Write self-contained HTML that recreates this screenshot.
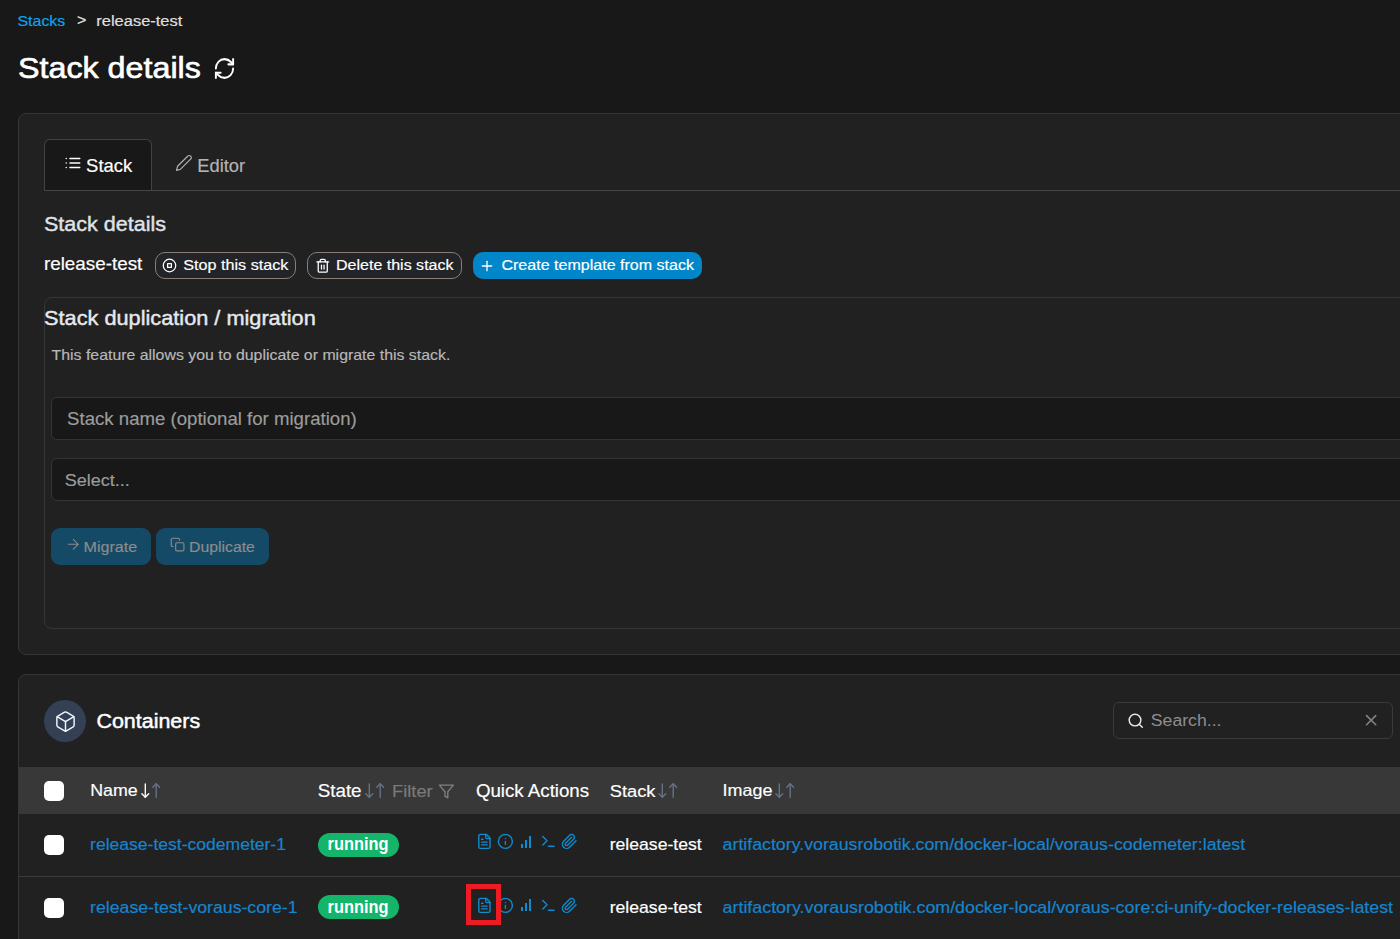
<!DOCTYPE html>
<html><head><meta charset="utf-8">
<style>
html,body{margin:0;padding:0;width:1400px;height:939px;overflow:hidden;background:#181818;}
body{position:relative;font-family:"Liberation Sans",sans-serif;color:#fff;}
.a{position:absolute;box-sizing:border-box;}
.t{position:absolute;white-space:nowrap;line-height:1;-webkit-text-stroke-width:0.18px;}
svg{position:absolute;overflow:visible;}
.card{position:absolute;left:18px;width:1500px;background:#212121;border:1px solid #363636;border-radius:8px;box-sizing:border-box;}
.btn-o{position:absolute;top:252px;height:27px;border:1px solid #877f76;border-radius:10px;background:#232428;box-sizing:border-box;}
.inp{position:absolute;left:51px;width:1450px;background:#181818;border:1px solid #343434;border-radius:6px;box-sizing:border-box;}
.cb{position:absolute;left:44px;width:20px;height:20px;background:#fff;border-radius:5px;}
.badge{position:absolute;left:318px;width:81px;height:24px;background:#14b56b;border-radius:12px;}
</style></head><body>
<div class="t" style="left:17.50px;top:12.52px;font-size:15.93px;color:#0ea5ef;transform:scaleY(0.94);transform-origin:0 13.48px;">Stacks</div>
<div class="t" style="left:76.90px;top:12.46px;font-size:16.00px;color:#e0e0e0;transform:scaleY(0.94);transform-origin:0 13.54px;">&gt;</div>
<div class="t" style="left:96.30px;top:12.05px;font-size:16.48px;color:#e0e0e0;transform:scaleY(0.94);transform-origin:0 13.95px;">release-test</div>
<div class="t" style="left:18.00px;top:50.80px;font-size:32.25px;color:#ffffff;transform:scaleY(0.94);transform-origin:0 27.30px;-webkit-text-stroke-width:0.7px;">Stack details</div>
<svg style="left:213.00px;top:55.70px" width="23.00" height="25.00" viewBox="0 0 24 24" preserveAspectRatio="none" fill="none" stroke="#ffffff" stroke-width="2" stroke-linecap="round" stroke-linejoin="round"><path d="M3 12a9 9 0 0 1 9-9 9.75 9.75 0 0 1 6.74 2.74L21 8"/><path d="M21 3v5h-5"/><path d="M21 12a9 9 0 0 1-9 9 9.75 9.75 0 0 1-6.74-2.74L3 16"/><path d="M8 16H3v5"/></svg>
<div class="card" style="top:113px;height:542px;"></div>
<div class="a" style="left:44px;top:190px;width:1400px;height:1px;background:#464646;"></div>
<div class="a" style="left:44px;top:139px;width:108px;height:51px;background:#181818;border:1px solid #424242;border-bottom:none;border-radius:6px 6px 0 0;"></div>
<svg style="left:63.50px;top:153.70px" width="18.00" height="18.00" viewBox="0 0 24 24" fill="none" stroke="#ffffff" stroke-width="2" stroke-linecap="round" stroke-linejoin="round"><line x1="8" x2="21" y1="6" y2="6"/><line x1="8" x2="21" y1="12" y2="12"/><line x1="8" x2="21" y1="18" y2="18"/><line x1="3" x2="3.01" y1="6" y2="6"/><line x1="3" x2="3.01" y1="12" y2="12"/><line x1="3" x2="3.01" y1="18" y2="18"/></svg>
<div class="t" style="left:86.10px;top:156.88px;font-size:18.46px;color:#ffffff;">Stack</div>
<svg style="left:175.20px;top:154.40px" width="17.80" height="17.80" viewBox="0 0 24 24" fill="none" stroke="#b0b0b0" stroke-width="1.6" stroke-linecap="round" stroke-linejoin="round"><path d="M17 3a2.85 2.83 0 1 1 4 4L7.5 20.5 2 22l1.5-5.5Z"/></svg>
<div class="t" style="left:197.30px;top:156.71px;font-size:18.30px;color:#b4b4b4;">Editor</div>
<div class="t" style="left:43.90px;top:213.45px;font-size:21.56px;color:#dfe2e6;transform:scaleY(0.94);transform-origin:0 18.25px;-webkit-text-stroke-width:0.45px;">Stack details</div>
<div class="t" style="left:43.90px;top:254.84px;font-size:18.85px;color:#ffffff;transform:scaleY(0.94);transform-origin:0 15.96px;">release-test</div>
<div class="btn-o" style="left:155px;width:141px;"></div>
<svg style="left:162.00px;top:257.80px" width="15.00" height="15.00" viewBox="0 0 24 24" fill="none" stroke="#ffffff" stroke-width="2" stroke-linecap="round" stroke-linejoin="round"><circle cx="12" cy="12" r="10"/><rect width="6" height="6" x="9" y="9"/></svg>
<div class="t" style="left:183.30px;top:255.71px;font-size:16.17px;color:#ffffff;transform:scaleY(0.94);transform-origin:0 13.69px;">Stop this stack</div>
<div class="btn-o" style="left:307px;width:155px;"></div>
<svg style="left:314.70px;top:257.90px" width="15.50" height="15.50" viewBox="0 0 24 24" fill="none" stroke="#ffffff" stroke-width="2" stroke-linecap="round" stroke-linejoin="round"><path d="M3 6h18"/><path d="M19 6v14c0 1-1 2-2 2H7c-1 0-2-1-2-2V6"/><path d="M8 6V4c0-1 1-2 2-2h4c1 0 2 1 2 2v2"/><line x1="10" x2="10" y1="11" y2="17"/><line x1="14" x2="14" y1="11" y2="17"/></svg>
<div class="t" style="left:336.00px;top:255.83px;font-size:16.03px;color:#ffffff;transform:scaleY(0.94);transform-origin:0 13.57px;">Delete this stack</div>
<div class="a" style="left:473px;top:252px;width:229px;height:27px;background:#0086c9;border-radius:10px;"></div>
<svg style="left:479.30px;top:257.50px" width="16.00" height="16.00" viewBox="0 0 24 24" fill="none" stroke="#ffffff" stroke-width="2" stroke-linecap="round" stroke-linejoin="round"><path d="M5 12h14"/><path d="M12 5v14"/></svg>
<div class="t" style="left:501.40px;top:255.81px;font-size:16.06px;color:#ffffff;transform:scaleY(0.94);transform-origin:0 13.59px;">Create template from stack</div>
<div class="a" style="left:44px;top:297px;width:1400px;height:332px;border:1px solid #363636;border-radius:8px;"></div>
<div class="t" style="left:44.10px;top:307.22px;font-size:21.72px;color:#e6e9ee;transform:scaleY(0.94);transform-origin:0 18.38px;-webkit-text-stroke-width:0.45px;">Stack duplication / migration</div>
<div class="t" style="left:51.50px;top:346.75px;font-size:15.89px;color:#b8b8b8;transform:scaleY(0.94);transform-origin:0 13.45px;">This feature allows you to duplicate or migrate this stack.</div>
<div class="inp" style="top:397px;height:43px;"></div>
<div class="t" style="left:67.10px;top:409.93px;font-size:18.63px;color:#9c9c9c;transform:scaleY(0.94);transform-origin:0 15.77px;">Stack name (optional for migration)</div>
<div class="inp" style="top:458px;height:43px;"></div>
<div class="t" style="left:64.70px;top:471.37px;font-size:17.99px;color:#9c9c9c;transform:scaleY(0.94);transform-origin:0 15.23px;">Select...</div>
<div class="a" style="left:51px;top:528px;width:100px;height:37px;background:#154a66;border-radius:9px;"></div>
<svg style="left:64.60px;top:536.40px" width="16.60" height="16.60" viewBox="0 0 24 24" fill="none" stroke="#8a8a8a" stroke-width="1.5" stroke-linecap="round" stroke-linejoin="round"><path d="M5 12h14"/><path d="m12 5 7 7-7 7"/></svg>
<div class="t" style="left:83.50px;top:538.44px;font-size:16.13px;color:#8c8c8c;transform:scaleY(0.94);transform-origin:0 13.66px;">Migrate</div>
<div class="a" style="left:156px;top:528px;width:113px;height:37px;background:#154a66;border-radius:9px;"></div>
<svg style="left:169.80px;top:537.30px" width="15.20" height="15.20" viewBox="0 0 24 24" fill="none" stroke="#8a8a8a" stroke-width="1.8" stroke-linecap="round" stroke-linejoin="round"><rect x="9" y="9" width="13" height="13" rx="2" ry="2"/><path d="M5 15H4a2 2 0 0 1-2-2V4a2 2 0 0 1 2-2h9a2 2 0 0 1 2 2v1"/></svg>
<div class="t" style="left:189.00px;top:538.72px;font-size:15.81px;color:#8c8c8c;transform:scaleY(0.94);transform-origin:0 13.38px;">Duplicate</div>
<div class="card" style="top:674px;height:400px;"></div>
<div class="a" style="left:44px;top:700px;width:42px;height:42px;border-radius:50%;background:#344054;"></div>
<svg style="left:53.50px;top:710.30px" width="23.00" height="23.00" viewBox="0 0 24 24" fill="none" stroke="#f2f6ff" stroke-width="1.5" stroke-linecap="round" stroke-linejoin="round"><path d="M21 16V8a2 2 0 0 0-1-1.73l-7-4a2 2 0 0 0-2 0l-7 4A2 2 0 0 0 3 8v8a2 2 0 0 0 1 1.73l7 4a2 2 0 0 0 2 0l7-4A2 2 0 0 0 21 16z"/><polyline points="3.27 6.96 12 12.01 20.73 6.96"/><line x1="12" y1="22.08" x2="12" y2="12"/></svg>
<div class="t" style="left:96.40px;top:711.33px;font-size:21.46px;color:#ffffff;transform:scaleY(0.94);transform-origin:0 18.17px;-webkit-text-stroke-width:0.5px;">Containers</div>
<div class="a" style="left:1113px;top:702px;width:280px;height:37px;border:1px solid #3a3a3a;border-radius:6px;background:#212121;"></div>
<svg style="left:1126.80px;top:712.10px" width="17.50" height="17.50" viewBox="0 0 24 24" fill="none" stroke="#e8e8e8" stroke-width="2" stroke-linecap="round" stroke-linejoin="round"><circle cx="11" cy="11" r="8"/><path d="m21 21-4.3-4.3"/></svg>
<div class="t" style="left:1150.80px;top:712.05px;font-size:17.67px;color:#8e8e8e;transform:scaleY(0.94);transform-origin:0 14.95px;-webkit-text-stroke-width:0;">Search...</div>
<svg style="left:1361.60px;top:711.30px" width="18.30" height="18.30" viewBox="0 0 24 24" fill="none" stroke="#838383" stroke-width="2.1" stroke-linecap="round" stroke-linejoin="round"><path d="M18 6 6 18"/><path d="m6 6 12 12"/></svg>
<div class="a" style="left:19px;top:767px;width:1400px;height:47px;background:#383838;"></div>
<div class="cb" style="top:781px;"></div>
<div class="t" style="left:90.20px;top:782.40px;font-size:17.84px;color:#ffffff;transform:scaleY(0.94);transform-origin:0 15.10px;">Name</div>
<svg style="left:140.60px;top:783.00px" width="20" height="15" viewBox="0 0 20 15" fill="none" stroke-width="1.35" stroke-linecap="round" stroke-linejoin="round"><g stroke="#ffffff"><path d="M4.3 .8V14.2"/><path d="M.9 10.7L4.3 14.2L7.7 10.7"/></g><g stroke="#677389"><path d="M15.2 .8V14.2"/><path d="M11.8 4.3L15.2 .8L18.6 4.3"/></g></svg>
<div class="t" style="left:317.70px;top:781.59px;font-size:18.80px;color:#ffffff;transform:scaleY(0.94);transform-origin:0 15.91px;">State</div>
<svg style="left:364.60px;top:783.00px" width="20" height="15" viewBox="0 0 20 15" fill="none" stroke-width="1.35" stroke-linecap="round" stroke-linejoin="round"><g stroke="#677389"><path d="M4.3 .8V14.2"/><path d="M.9 10.7L4.3 14.2L7.7 10.7"/></g><g stroke="#677389"><path d="M15.2 .8V14.2"/><path d="M11.8 4.3L15.2 .8L18.6 4.3"/></g></svg>
<div class="t" style="left:392.00px;top:781.99px;font-size:18.32px;color:#7a7a7a;transform:scaleY(0.94);transform-origin:0 15.51px;">Filter</div>
<svg style="left:438.30px;top:782.80px" width="16.80" height="16.80" viewBox="0 0 24 24" fill="none" stroke="#808080" stroke-width="1.9" stroke-linecap="round" stroke-linejoin="round"><polygon points="22 3 2 3 10 12.46 10 19 14 21 14 12.46 22 3"/></svg>
<div class="t" style="left:475.90px;top:781.67px;font-size:18.70px;color:#ffffff;transform:scaleY(0.94);transform-origin:0 15.83px;">Quick Actions</div>
<div class="t" style="left:609.70px;top:782.01px;font-size:18.30px;color:#ffffff;transform:scaleY(0.94);transform-origin:0 15.49px;">Stack</div>
<svg style="left:657.60px;top:783.00px" width="20" height="15" viewBox="0 0 20 15" fill="none" stroke-width="1.35" stroke-linecap="round" stroke-linejoin="round"><g stroke="#677389"><path d="M4.3 .8V14.2"/><path d="M.9 10.7L4.3 14.2L7.7 10.7"/></g><g stroke="#677389"><path d="M15.2 .8V14.2"/><path d="M11.8 4.3L15.2 .8L18.6 4.3"/></g></svg>
<div class="t" style="left:722.60px;top:782.30px;font-size:17.96px;color:#ffffff;transform:scaleY(0.94);transform-origin:0 15.20px;">Image</div>
<svg style="left:774.60px;top:783.00px" width="20" height="15" viewBox="0 0 20 15" fill="none" stroke-width="1.35" stroke-linecap="round" stroke-linejoin="round"><g stroke="#677389"><path d="M4.3 .8V14.2"/><path d="M.9 10.7L4.3 14.2L7.7 10.7"/></g><g stroke="#677389"><path d="M15.2 .8V14.2"/><path d="M11.8 4.3L15.2 .8L18.6 4.3"/></g></svg>
<div class="a" style="left:19px;top:876px;width:1400px;height:1px;background:#3a3a3a;"></div>
<div class="cb" style="top:835px;"></div>
<div class="t" style="left:90.10px;top:835.74px;font-size:17.55px;color:#1585cf;transform:scaleY(0.94);transform-origin:0 14.86px;">release-test-codemeter-1</div>
<div class="badge" style="top:833px;"></div>
<div class="t" style="left:327.60px;top:836.42px;font-size:16.39px;color:#ffffff;font-weight:bold;transform:scaleY(1.1);transform-origin:0 13.88px;-webkit-text-stroke-width:0;">running</div>
<svg style="left:476.00px;top:833.20px" width="16.80" height="16.80" viewBox="0 0 24 24" fill="none" stroke="#0e8ccf" stroke-width="2" stroke-linecap="round" stroke-linejoin="round"><path d="M15 2H6a2 2 0 0 0-2 2v16a2 2 0 0 0 2 2h12a2 2 0 0 0 2-2V7Z"/><path d="M14 2v4a2 2 0 0 0 2 2h4"/><path d="M10 9H8"/><path d="M16 13H8"/><path d="M16 17H8"/></svg>
<svg style="left:496.80px;top:833.20px" width="16.80" height="16.80" viewBox="0 0 24 24" fill="none" stroke="#0e8ccf" stroke-width="2" stroke-linecap="round" stroke-linejoin="round"><circle cx="12" cy="12" r="10"/><path d="M12 16v-4"/><path d="M12 8h.01"/></svg>
<svg style="left:539.80px;top:833.20px" width="16.80" height="16.80" viewBox="0 0 24 24" fill="none" stroke="#0e8ccf" stroke-width="2" stroke-linecap="round" stroke-linejoin="round"><polyline points="4 17 10 11 4 5"/><line x1="12" x2="20" y1="19" y2="19"/></svg>
<svg style="left:561.30px;top:833.20px" width="16.80" height="16.80" viewBox="0 0 24 24" fill="none" stroke="#0e8ccf" stroke-width="2" stroke-linecap="round" stroke-linejoin="round"><path d="m21.44 11.05-9.19 9.19a6 6 0 0 1-8.49-8.49l8.57-8.57A4 4 0 1 1 18 8.84l-8.59 8.57a2 2 0 0 1-2.83-2.83l8.49-8.48"/></svg>
<div class="a" style="left:520.90px;top:843.60px;width:2.00px;height:4.10px;background:#0e8ccf;"></div>
<div class="a" style="left:524.80px;top:839.60px;width:2.00px;height:8.10px;background:#0e8ccf;"></div>
<div class="a" style="left:529.10px;top:835.70px;width:1.90px;height:12.00px;background:#0e8ccf;"></div>
<div class="t" style="left:609.70px;top:835.78px;font-size:17.63px;color:#ffffff;transform:scaleY(0.94);transform-origin:0 14.92px;">release-test</div>
<div class="t" style="left:722.60px;top:835.67px;font-size:17.75px;color:#1585cf;transform:scaleY(0.94);transform-origin:0 15.03px;">artifactory.vorausrobotik.com/docker-local/voraus-codemeter:latest</div>
<div class="cb" style="top:898px;"></div>
<div class="t" style="left:90.10px;top:899.22px;font-size:17.69px;color:#1585cf;transform:scaleY(0.94);transform-origin:0 14.98px;">release-test-voraus-core-1</div>
<div class="badge" style="top:895px;"></div>
<div class="t" style="left:327.60px;top:898.82px;font-size:16.39px;color:#ffffff;font-weight:bold;transform:scaleY(1.1);transform-origin:0 13.88px;-webkit-text-stroke-width:0;">running</div>
<svg style="left:476.00px;top:896.50px" width="16.80" height="16.80" viewBox="0 0 24 24" fill="none" stroke="#0e8ccf" stroke-width="2" stroke-linecap="round" stroke-linejoin="round"><path d="M15 2H6a2 2 0 0 0-2 2v16a2 2 0 0 0 2 2h12a2 2 0 0 0 2-2V7Z"/><path d="M14 2v4a2 2 0 0 0 2 2h4"/><path d="M10 9H8"/><path d="M16 13H8"/><path d="M16 17H8"/></svg>
<svg style="left:496.80px;top:896.50px" width="16.80" height="16.80" viewBox="0 0 24 24" fill="none" stroke="#0e8ccf" stroke-width="2" stroke-linecap="round" stroke-linejoin="round"><circle cx="12" cy="12" r="10"/><path d="M12 16v-4"/><path d="M12 8h.01"/></svg>
<svg style="left:539.80px;top:896.50px" width="16.80" height="16.80" viewBox="0 0 24 24" fill="none" stroke="#0e8ccf" stroke-width="2" stroke-linecap="round" stroke-linejoin="round"><polyline points="4 17 10 11 4 5"/><line x1="12" x2="20" y1="19" y2="19"/></svg>
<svg style="left:561.30px;top:896.50px" width="16.80" height="16.80" viewBox="0 0 24 24" fill="none" stroke="#0e8ccf" stroke-width="2" stroke-linecap="round" stroke-linejoin="round"><path d="m21.44 11.05-9.19 9.19a6 6 0 0 1-8.49-8.49l8.57-8.57A4 4 0 1 1 18 8.84l-8.59 8.57a2 2 0 0 1-2.83-2.83l8.49-8.48"/></svg>
<div class="a" style="left:520.90px;top:906.90px;width:2.00px;height:4.10px;background:#0e8ccf;"></div>
<div class="a" style="left:524.80px;top:902.90px;width:2.00px;height:8.10px;background:#0e8ccf;"></div>
<div class="a" style="left:529.10px;top:899.00px;width:1.90px;height:12.00px;background:#0e8ccf;"></div>
<div class="t" style="left:609.70px;top:899.38px;font-size:17.63px;color:#ffffff;transform:scaleY(0.94);transform-origin:0 14.92px;">release-test</div>
<div class="t" style="left:722.60px;top:899.21px;font-size:17.83px;color:#1585cf;transform:scaleY(0.94);transform-origin:0 15.09px;">artifactory.vorausrobotik.com/docker-local/voraus-core:ci-unify-docker-releases-latest</div>
<div class="a" style="left:466px;top:884px;width:35px;height:41px;border:5px solid #ed1c24;"></div>
</body></html>
